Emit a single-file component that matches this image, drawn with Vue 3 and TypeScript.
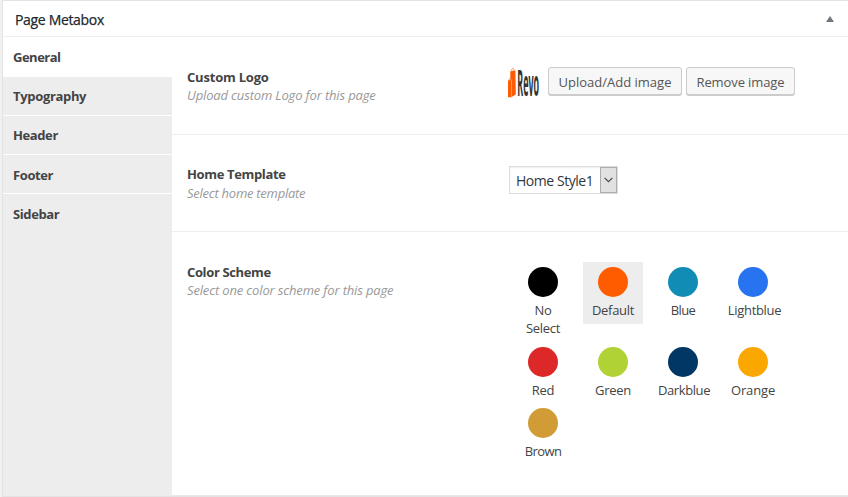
<script setup lang="ts">
import { ref } from 'vue'

interface Tab { name: string; key: string }
interface Swatch { name: string; color: string }

const tabs: Tab[] = [
  { name: 'General', key: 'general' },
  { name: 'Typography', key: 'typography' },
  { name: 'Header', key: 'header' },
  { name: 'Footer', key: 'footer' },
  { name: 'Sidebar', key: 'sidebar' },
]
const activeTab = ref('General')

const swatches: Swatch[] = [
  { name: 'No Select', color: '#000000' },
  { name: 'Default', color: '#ff5c00' },
  { name: 'Blue', color: '#118db5' },
  { name: 'Lightblue', color: '#2874f0' },
  { name: 'Red', color: '#dc2828' },
  { name: 'Green', color: '#b0d235' },
  { name: 'Darkblue', color: '#013764' },
  { name: 'Orange', color: '#faa700' },
  { name: 'Brown', color: '#d19c35' },
]
const selected = ref('Default')
</script>

<template>
  <div class="page">
    <section class="metabox">
      <header class="title-bar">
        <h2>Page Metabox</h2>
        <svg class="toggle" width="8" height="6" viewBox="0 0 8 6"><path d="M4 0 8 6H0z" fill="#72777c" /></svg>
      </header>
      <div class="body">
        <nav class="tabs">
          <a
            v-for="tab in tabs"
            :key="tab.key"
            class="tab"
            :class="[tab.key, { active: activeTab === tab.name }]"
            @click="activeTab = tab.name"
          >{{ tab.name }}</a>
        </nav>
        <div class="content">
          <div class="field logo-field">
            <div class="info">
              <strong>Custom Logo</strong>
              <em>Upload custom Logo for this page</em>
            </div>
            <div class="control logo-control">
              <svg class="logo" width="31" height="31" viewBox="0 0 31 31">
                <path d="M0 13.5 3.6 12.5V30.3H0z" fill="#ff5c00" />
                <path d="M2.3 4.2 7.4 3.5 7.8 27.5 3.6 30V13l-1.3-.3z" fill="#ff5a00" />
                <path d="M3.8 4.3V2Q4.9 0 6 2v2M1 13.5V12q.8-1.4 1.4 0" fill="none" stroke="#ff8c50" stroke-width=".8" />
                <path d="M3.6 13v17" stroke="#ffa870" stroke-width=".5" />
                <text class="logo-text" transform="translate(9.3 28.5) scale(.255 1)">Revo</text>
              </svg>
              <button class="btn upload">Upload/Add image</button>
              <button class="btn remove">Remove image</button>
            </div>
          </div>
          <div class="field template-field">
            <div class="info">
              <strong>Home Template</strong>
              <em>Select home template</em>
            </div>
            <div class="control">
              <div class="select">
                <span class="value">Home Style1</span>
                <span class="arrow">
                  <svg width="9" height="6" viewBox="0 0 9 6"><path d="M.6.8 4.5 4.7 8.4.8" fill="none" stroke="#444" stroke-width="1.1" /></svg>
                </span>
              </div>
            </div>
          </div>
          <div class="field scheme-field">
            <div class="info">
              <strong>Color Scheme</strong>
              <em>Select one color scheme for this page</em>
            </div>
            <div class="swatches">
              <div
                v-for="s in swatches"
                :key="s.name"
                class="swatch"
                :class="[s.name.toLowerCase().replace(' ', '-'), { selected: selected === s.name }]"
                @click="selected = s.name"
              >
                <i class="dot" :style="{ background: s.color }"></i>
                <span>{{ s.name }}</span>
              </div>
            </div>
          </div>
        </div>
      </div>
    </section>
  </div>
</template>

<style>
body { margin: 0; background: #f1f1f1; overflow: hidden; }
</style>

<style scoped>
* { box-sizing: border-box; }
.page {
  width: 848px;
  height: 497px;
  padding-left: 2px;
  overflow: hidden;
  background: #f1f1f1;
  color: #444;
  font: 13px/18px "Open Sans", "Noto Sans", sans-serif;
}
.metabox {
  display: flex;
  flex-direction: column;
  height: 497px;
  border: solid #e3e3e3;
  border-width: 1px 0 1px 1px;
  background: #fff;
}
.title-bar {
  display: flex;
  justify-content: space-between;
  align-items: center;
  height: 36px;
  padding: 2px 14px 0 12px;
  border-bottom: 1px solid #eee;
}
h2 {
  margin: 0;
  color: #23282d;
  font-size: 14px;
  line-height: 20px;
  font-weight: 400;
  letter-spacing: -.33px;
  -webkit-text-stroke: .25px #23282d;
}
.toggle { margin-bottom: 1px; }
.body { display: flex; flex: 1; }
.tabs { width: 169px; background: #ededed; }
.tab {
  display: block;
  height: 39px;
  padding: 10px 10px 0;
  border-bottom: 1px solid #fff;
  font-weight: 700;
  letter-spacing: -.4px;
  cursor: pointer;
}
.tab.active { height: 40px; padding-top: 11px; background: #fff; }
.general { letter-spacing: -.5px; }
.typography { letter-spacing: -.33px; }
.footer { padding-top: 11px; }
.tab.sidebar { padding-top: 11px; border-bottom: 0; }
.content { flex: 1; border-bottom: 1px solid #e8e8e8; }
.field { display: flex; padding-left: 15px; border-bottom: 1px solid #eee; }
.logo-field { height: 98px; padding-top: 31px; }
.template-field { height: 97px; padding-top: 31px; }
.scheme-field { border-bottom: 0; padding-top: 30px; }
.info { width: 322px; white-space: nowrap; }
.info strong, .info em { display: block; width: max-content; }
.info strong { letter-spacing: -.36px; }
.info em { color: #999; letter-spacing: -.15px; }
.logo-field strong { letter-spacing: -.2px; }
.template-field strong { margin-top: -1px; margin-bottom: 1px; }
.template-field em { letter-spacing: -.25px; }
.scheme-field .info { padding-top: 1px; }
.logo-control { display: flex; height: 31px; margin-left: -1px; }
.logo { display: block; margin-top: -1px; overflow: visible; }
.logo-text { font: 700 35px "Open Sans", sans-serif; fill: #333; }
.btn {
  display: flex;
  justify-content: center;
  height: 28px;
  margin: -1px 0 0;
  padding: 0;
  border: 1px solid #ccc;
  border-radius: 3px;
  background: #f7f7f7;
  box-shadow: 0 1px 0 #ccc;
  color: #555;
  font: 13px/29px "Open Sans", "Noto Sans", sans-serif;
  white-space: nowrap;
}
.upload { width: 134px; margin-left: 9px; }
.remove { width: 109px; margin-left: 4px; letter-spacing: -.1px; }
.select {
  display: flex;
  width: 109px;
  height: 28px;
  border: 1px solid #ddd;
  box-shadow: inset 0 1px 2px rgba(0, 0, 0, .07);
  color: #32373c;
}
.value {
  width: 90px;
  padding-left: 6px;
  font-size: 14px;
  line-height: 28px;
  letter-spacing: -.45px;
  white-space: nowrap;
}
.arrow {
  display: flex;
  align-items: center;
  justify-content: center;
  width: 17px;
  height: 26px;
  border: 1px solid #adadad;
  background: #e1e1e1;
}
.swatches {
  display: grid;
  grid-template-columns: repeat(4, 60px);
  grid-template-rows: 80px 61px 62px;
  column-gap: 10px;
  align-items: start;
  padding-left: 4px;
}
.swatch {
  display: flex;
  flex-direction: column;
  align-items: center;
  padding: 5px;
  text-align: center;
  letter-spacing: -.3px;
  cursor: pointer;
}
.swatch span { max-width: 50px; }
.swatch.selected { background: #ededed; }
.lightblue span, .darkblue span { max-width: none; }
.lightblue { padding-left: 8px; }
.darkblue { padding-left: 7px; letter-spacing: -.4px; }
.blue, .brown { letter-spacing: -.6px; }
.orange { letter-spacing: -.15px; }
.dot { width: 30px; height: 30px; margin-bottom: 4px; border-radius: 50%; }
.lightblue .dot { margin-left: -3px; }
.darkblue .dot { margin-left: -2px; }
</style>
